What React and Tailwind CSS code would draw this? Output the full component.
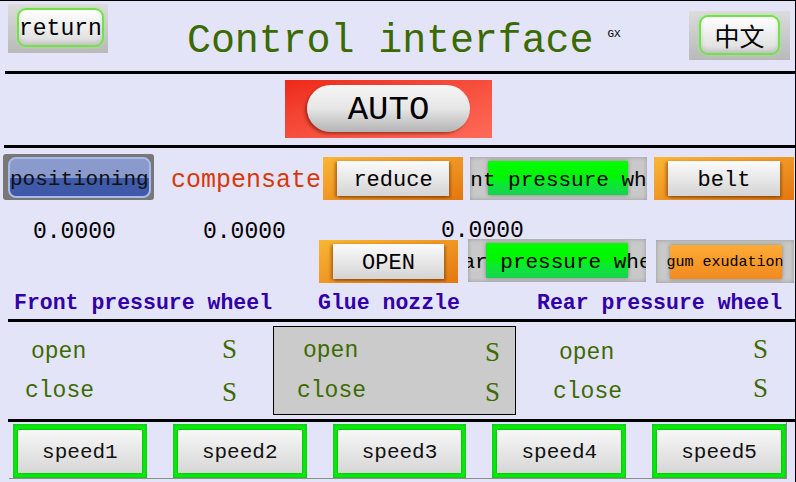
const mono = "font-['Liberation_Mono',monospace]";
const serif = "font-['Liberation_Serif',serif]";

const GlowButton = ({ label, outerClass, textClass }) => (
  <div className={`bg-gradient-to-b from-[#dcdcdc] to-[#b9b9b9] flex ${outerClass}`}>
    <div className="flex-1 rounded-[9px] border-2 border-[#74e04c] shadow-[0_0_3px_#9af27a,inset_0_-3px_4px_rgba(0,0,0,0.12)] bg-gradient-to-b from-white to-[#dcdcdc] flex items-center justify-center">
      <span className={`whitespace-nowrap text-black ${textClass}`}>{label}</span>
    </div>
  </div>
);

const OrangeButton = ({ label, className }) => (
  <div
    className={`bg-gradient-to-br from-[#f8b634] to-[#e5760e] flex pt-[4px] pb-[4px] pl-[14px] pr-[14px] ${className}`}
  >
    <div className="flex-1 bg-gradient-to-b from-[#fbfbfb] to-[#d4d4d4] shadow-[-2px_1px_3px_rgba(120,50,0,0.55),2px_2px_2px_rgba(0,0,0,0.25)] flex items-center justify-center">
      <span className={`${mono} text-[22px] leading-[22px] text-black mt-[4px]`}>{label}</span>
    </div>
  </div>
);

const LampBox = ({ label, lampClass, textClass, className }) => (
  <div
    className={`relative overflow-hidden bg-[#c9c9c9] shadow-[inset_0_0_4px_rgba(0,0,0,0.25)] flex ${className}`}
  >
    <div className={`flex-1 ${lampClass}`} />
    <div className="absolute inset-0 flex items-center justify-center">
      <span className={`whitespace-nowrap text-black ${textClass}`}>{label}</span>
    </div>
  </div>
);

const SpeedButton = ({ label }) => (
  <div className="w-[134px] h-[54px] bg-[#08ec08] shadow-[inset_0_0_3px_#2c9c48] p-[5px] pt-[6px] flex">
    <div className="flex-1 bg-gradient-to-b from-[#f8f8f8] to-[#d6d6d6] shadow-[0_0_2px_rgba(0,80,0,0.6)] flex items-center justify-center">
      <span className={`${mono} text-[21px] leading-[21px] text-[#111] mt-[2px]`}>{label}</span>
    </div>
  </div>
);

const Rule = ({ className }) => <div className={`h-[3px] bg-black ${className}`} />;

const lampGreen =
  "bg-gradient-to-b from-[#00ff00] via-[#02f404] to-[#16d24e] shadow-[0_0_4px_rgba(0,0,0,0.35)]";

export default function App() {
  return (
    <div className="w-[796px] h-[482px] bg-[#e4e4f8] border-t border-r border-black overflow-hidden flex flex-col">
      {/* header */}
      <div className="h-[70px] flex items-start">
        <GlowButton
          label="return"
          outerClass="ml-[8px] mt-[3px] w-[100px] h-[49px] pt-[4px] pl-[9px] pr-[6px] pb-[6px]"
          textClass={`${mono} text-[23px] leading-[23px] mt-[3px]`}
        />
        <div
          className={`ml-[79px] mt-[21px] ${mono} text-[40px] leading-[40px] tracking-[-0.1px] text-[#3a6a00] whitespace-nowrap`}
        >
          Control interface
        </div>
        <div className={`ml-[14px] mt-[28px] ${mono} text-[11px] leading-[11px] text-black`}>GX</div>
        <GlowButton
          label="中文"
          outerClass="ml-auto mr-[5px] mt-[10px] w-[101px] h-[49px] pt-[4px] pl-[10px] pr-[10px] pb-[5px]"
          textClass="font-['Noto_Sans_CJK_SC',sans-serif] text-[25px] leading-[25px]"
        />
      </div>
      <Rule className="ml-[5px]" />

      {/* auto */}
      <div className="h-[71px] flex items-start">
        <div className="ml-[285px] mt-[6px] w-[207px] h-[58px] bg-gradient-to-br from-[#ee2818] to-[#ff6a58] pt-[5px] pb-[6px] pl-[22px] pr-[22px] flex">
          <div className="flex-1 rounded-[24px] bg-gradient-to-b from-[#f6f6f6] via-[#e6e6e6] to-[#b4b4b4] shadow-[-2px_2px_3px_rgba(90,20,10,0.5)] flex items-center justify-center">
            <span className={`${mono} text-[34px] leading-[34px] text-black mt-[2px]`}>AUTO</span>
          </div>
        </div>
      </div>
      <Rule className="ml-[4px]" />

      {/* controls */}
      <div className="h-[171px] flex flex-col">
        <div className="mt-[6px] flex items-start">
          <div className="ml-[3px] w-[151px] h-[46px] bg-[#787878] rounded-[3px] pt-[3px] pb-[2px] pl-[5px] pr-[5px] flex">
            <div className="flex-1 rounded-[8px] border-2 border-[#a9b9ea] bg-[linear-gradient(to_bottom,#8a9acc_50%,#3e5aa8_50%)] flex items-center justify-center">
              <span className={`${mono} text-[21px] leading-[21px] text-[#111] whitespace-nowrap mt-[3px]`}>positioning</span>
            </div>
          </div>
          <div className={`ml-[17px] w-[148px] mt-[14px] ${mono} text-[25px] leading-[25px] text-[#d8380c]`}>
            compensate
          </div>
          <OrangeButton label="reduce" className="ml-[4px] mt-[3px] w-[140px] h-[43px]" />
          <LampBox
            label="Front pressure wheel"
            className="ml-[7px] mt-[3px] w-[177px] h-[43px] pt-[4px] pb-[5px] pl-[18px] pr-[19px]"
            lampClass={lampGreen}
            textClass={`${mono} text-[21px] leading-[21px] mt-[3px]`}
          />
          <OrangeButton label="belt" className="ml-[7px] mt-[3px] w-[140px] h-[43px]" />
        </div>

        <div className="flex items-start">
          <div className={`ml-[33px] mt-[21px] w-[84px] ${mono} text-[23px] leading-[23px] text-black`}>0.0000</div>
          <div className={`ml-[86px] mt-[21px] w-[82px] ${mono} text-[23px] leading-[23px] text-black`}>0.0000</div>
          <div className="ml-[34px] flex flex-col">
            <div className={`h-[40px] pl-[122px] pt-[21px] ${mono} text-[23px] leading-[20px] text-black`}>0.0000</div>
            <div className="flex items-start">
              <OrangeButton label="OPEN" className="w-[139px] h-[43px]" />
              <LampBox
                label="Rear pressure wheel"
                className="ml-[10px] -mt-[1px] w-[178px] h-[43px] pt-[4px] pb-[4px] pl-[18px] pr-[18px]"
                lampClass={lampGreen}
                textClass={`${mono} text-[21px] leading-[21px] mt-[3px]`}
              />
              <LampBox
                label="gum exudation"
                className="ml-[10px] w-[138px] h-[43px] pt-[5px] pb-[4px] pl-[14px] pr-[12px]"
                lampClass="bg-gradient-to-b from-[#ffab36] to-[#f08a1e] shadow-[0_0_4px_rgba(0,0,0,0.35)]"
                textClass={`${mono} text-[15px] leading-[15px] mt-[2px]`}
              />
            </div>
          </div>
        </div>

        <div className={`mt-[9px] flex ${mono} text-[21.5px] leading-[22px] font-bold text-[#3200a8] whitespace-nowrap`}>
          <div className="ml-[14px] w-[304px]">Front pressure wheel</div>
          <div className="w-[219px]">Glue nozzle</div>
          <div>Rear pressure wheel</div>
        </div>
      </div>
      <Rule className="ml-[8px]" />

      {/* status */}
      <div className={`h-[97px] flex items-start ${mono} text-[23px] leading-[23px] text-[#3d6a00]`}>
        <div className="w-[273px] flex flex-col">
          <div className="h-[48px] flex items-start">
            <div className="ml-[31px] w-[191px] mt-[19px]">open</div>
            <div className={`${serif} text-[27px] leading-[27px] mt-[14px]`}>S</div>
          </div>
          <div className="flex items-start">
            <div className="ml-[25px] w-[197px] mt-[10px]">close</div>
            <div className={`${serif} text-[27px] leading-[27px] mt-[9px]`}>S</div>
          </div>
        </div>
        <div className="mt-[4px] w-[243px] h-[89px] bg-[#cbcbcb] border border-black flex flex-col">
          <div className="h-[43px] flex items-start">
            <div className="ml-[29px] w-[182px] mt-[13px]">open</div>
            <div className={`${serif} text-[27px] leading-[27px] mt-[12px]`}>S</div>
          </div>
          <div className="flex items-start">
            <div className="ml-[23px] w-[188px] mt-[10px]">close</div>
            <div className={`${serif} text-[27px] leading-[27px] mt-[9px]`}>S</div>
          </div>
        </div>
        <div className="flex-1 flex flex-col">
          <div className="h-[48px] flex items-start">
            <div className="ml-[43px] w-[194px] mt-[20px]">open</div>
            <div className={`${serif} text-[27px] leading-[27px] mt-[14px]`}>S</div>
          </div>
          <div className="flex items-start">
            <div className="ml-[37px] w-[200px] mt-[11px]">close</div>
            <div className={`${serif} text-[27px] leading-[27px] mt-[5px]`}>S</div>
          </div>
        </div>
      </div>
      <Rule className="ml-[8px]" />

      {/* speeds */}
      <div className="ml-[9px] w-[778px] h-[57px] border-b border-r border-[#8c8c8c] pl-[4px] pt-[2px] flex items-start gap-[26px]">
        <SpeedButton label="speed1" />
        <SpeedButton label="speed2" />
        <SpeedButton label="speed3" />
        <SpeedButton label="speed4" />
        <SpeedButton label="speed5" />
      </div>
    </div>
  );
}
